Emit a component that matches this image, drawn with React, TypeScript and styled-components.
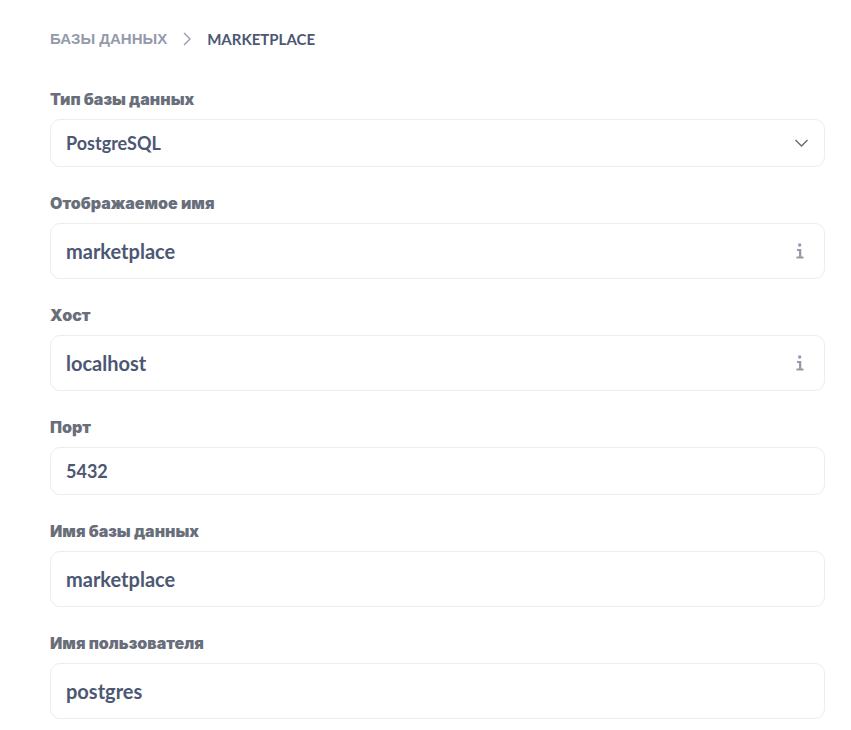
import React from "react";
import styled, { createGlobalStyle } from "styled-components";

const GlobalStyle = createGlobalStyle`
  *, *::before, *::after { box-sizing: border-box; }
  body { margin: 0; background: #fff; color: #4c5773; font-family: Lato, "Liberation Sans", sans-serif; }
`;

const Page = styled.main`
  padding: 27px 26px 12px 50px;
`;

const Breadcrumbs = styled.nav`
  display: flex;
  align-items: center;
  gap: 13px;
  margin-bottom: 38px;
  font-size: 15px;
  line-height: 24px;
  font-weight: 700;
`;

const CrumbLink = styled.a`
  color: #949aab;
  font-family: "Liberation Sans", Arial, sans-serif;
  text-decoration: none;
`;

const Current = styled.span`
  color: #4c5773;
`;

const Form = styled.form`
  display: flex;
  flex-direction: column;
  gap: 26px;
`;

const Field = styled.div`
  display: flex;
  flex-direction: column;
  gap: 9px;
`;

const Label = styled.label`
  color: #696e7b;
  font-family: Inter, sans-serif;
  font-size: 16px;
  line-height: 21px;
  font-weight: 900;
`;

const Box = styled.div<{ $compact?: boolean }>`
  display: flex;
  align-items: center;
  height: ${(p) => (p.$compact ? 48 : 56)}px;
  padding: 0 15px;
  border: 1px solid #eeecec;
  border-radius: 10px;
  background: #fff;
  font-size: ${(p) => (p.$compact ? 18 : 20)}px;
`;

const Input = styled.input`
  flex: 1;
  min-width: 0;
  padding: 0;
  border: 0;
  outline: 0;
  background: transparent;
  color: #4c5773;
  font: inherit;
  font-weight: 700;
`;

const Select = styled.select`
  flex: 1;
  min-width: 0;
  appearance: none;
  padding: 0;
  border: 0;
  outline: 0;
  background: transparent;
  color: #4c5773;
  font: inherit;
  font-weight: 700;
`;

const InfoButton = styled.button`
  display: flex;
  padding: 0 5px;
  border: 0;
  background: transparent;
  color: #949aab;
`;

const InfoIcon = () => (
  <svg width="8" height="16" viewBox="0 0 8 16" fill="currentColor" aria-hidden="true">
    <circle cx="3.7" cy="2" r="1.7" />
    <path d="M1 6h4.3v7.5H7.5v2H.5v-2H3V8H1z" />
  </svg>
);

const fields = [
  { id: "name", label: "Отображаемое имя", value: "marketplace", info: true },
  { id: "host", label: "Хост", value: "localhost", info: true },
  { id: "port", label: "Порт", value: "5432", compact: true },
  { id: "database", label: "Имя базы данных", value: "marketplace" },
  { id: "user", label: "Имя пользователя", value: "postgres" },
];

export default function App() {
  return (
    <Page>
      <GlobalStyle />
      <Breadcrumbs>
        <CrumbLink href="#databases">БАЗЫ ДАННЫХ</CrumbLink>
        <svg width="14" height="14" viewBox="0 0 14 14" fill="none" stroke="#949aab" strokeWidth="1.3" aria-hidden="true">
          <path d="M4 1l6 6-6 6" />
        </svg>
        <Current>MARKETPLACE</Current>
      </Breadcrumbs>
      <Form>
        <Field>
          <Label htmlFor="engine">Тип базы данных</Label>
          <Box $compact>
            <Select id="engine"><option>PostgreSQL</option></Select>
            <svg width="16" height="16" viewBox="0 0 16 16" fill="none" stroke="#696e7b" strokeWidth="1.5" aria-hidden="true">
              <path d="M2.5 5l6 6 6-6" />
            </svg>
          </Box>
        </Field>
        {fields.map((f) => (
          <Field key={f.id}>
            <Label htmlFor={f.id}>{f.label}</Label>
            <Box $compact={f.compact}>
              <Input id={f.id} defaultValue={f.value} />
              {f.info && <InfoButton type="button" aria-label="Подсказка"><InfoIcon /></InfoButton>}
            </Box>
          </Field>
        ))}
      </Form>
    </Page>
  );
}
